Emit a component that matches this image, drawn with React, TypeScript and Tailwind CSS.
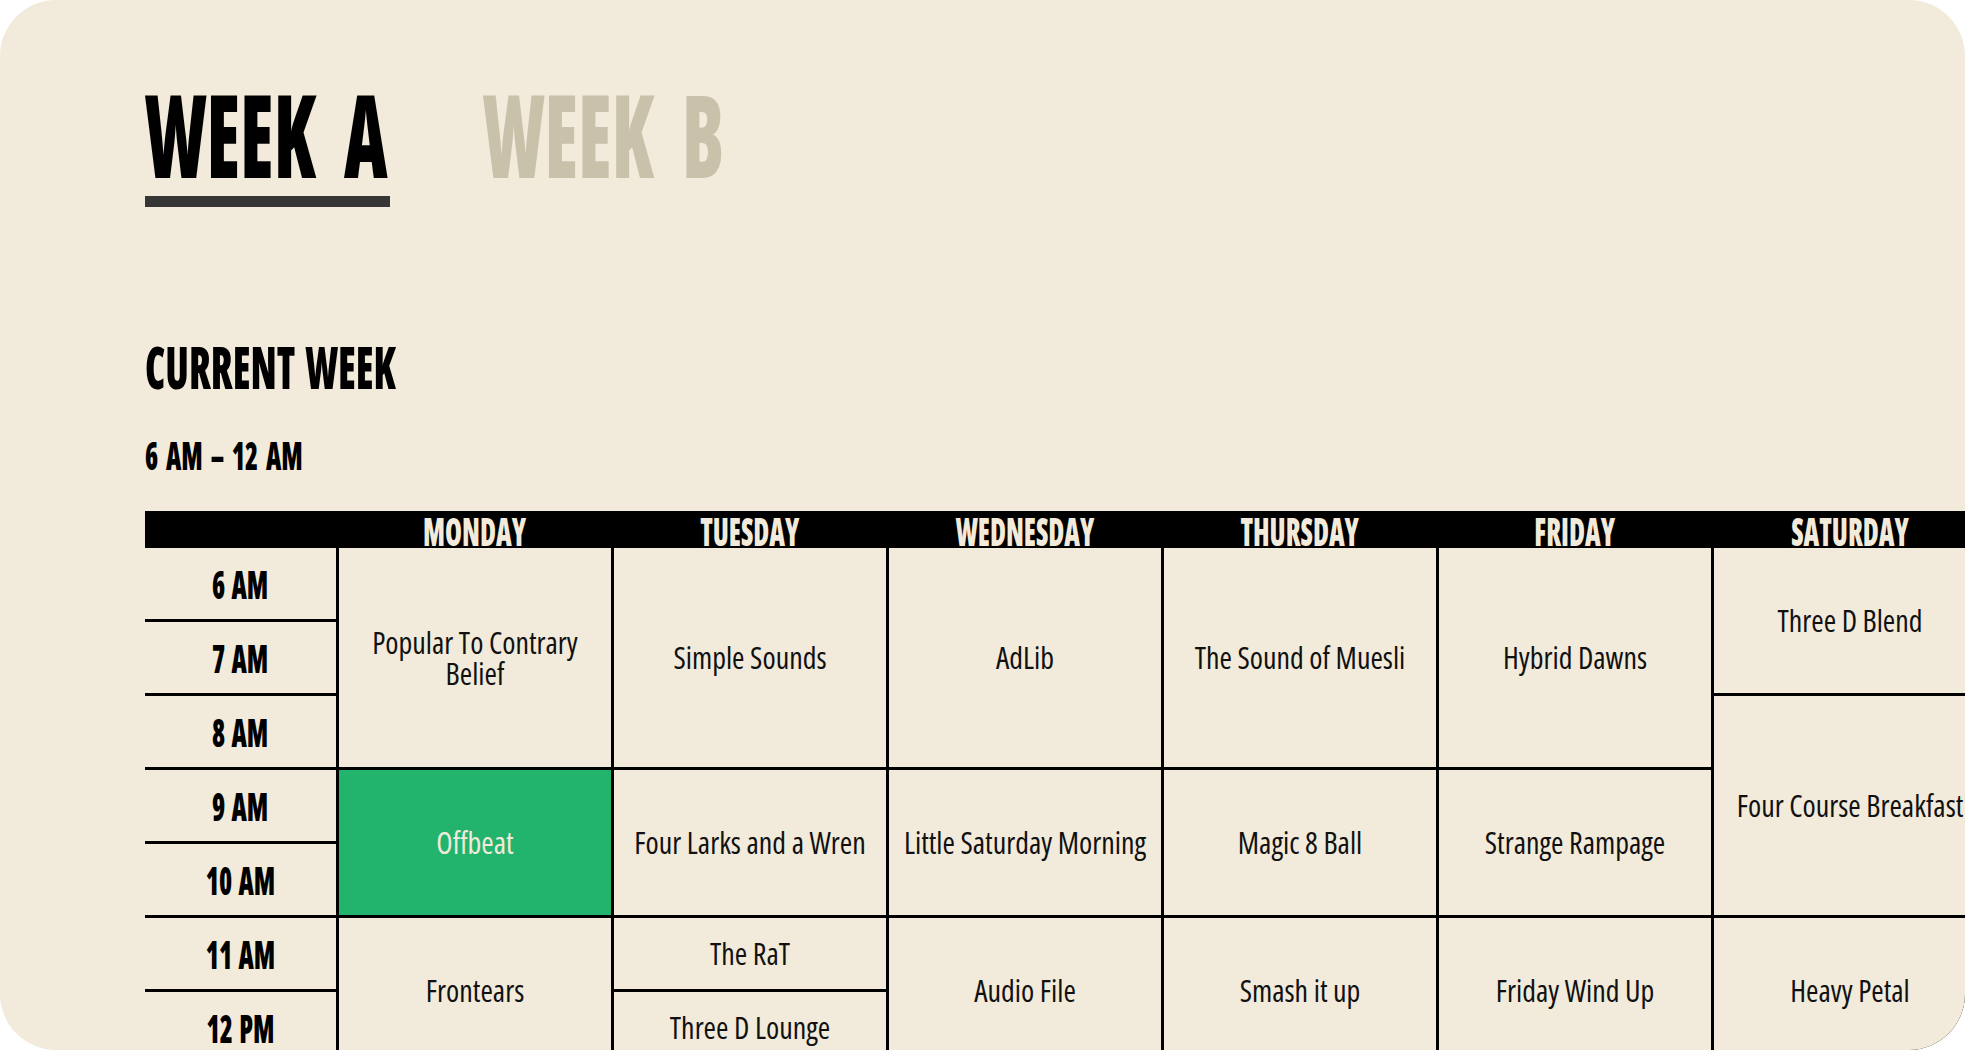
type Show = { title: string; span: 1 | 2 | 3; live?: boolean };

const times = ["6 AM", "7 AM", "8 AM", "9 AM", "10 AM", "11 AM", "12 PM"];

const schedule: { day: string; shows: Show[] }[] = [
  {
    day: "MONDAY",
    shows: [
      { title: "Popular To Contrary Belief", span: 3 },
      { title: "Offbeat", span: 2, live: true },
      { title: "Frontears", span: 2 },
    ],
  },
  {
    day: "TUESDAY",
    shows: [
      { title: "Simple Sounds", span: 3 },
      { title: "Four Larks and a Wren", span: 2 },
      { title: "The RaT", span: 1 },
      { title: "Three D Lounge", span: 1 },
    ],
  },
  {
    day: "WEDNESDAY",
    shows: [
      { title: "AdLib", span: 3 },
      { title: "Little Saturday Morning", span: 2 },
      { title: "Audio File", span: 2 },
    ],
  },
  {
    day: "THURSDAY",
    shows: [
      { title: "The Sound of Muesli", span: 3 },
      { title: "Magic 8 Ball", span: 2 },
      { title: "Smash it up", span: 2 },
    ],
  },
  {
    day: "FRIDAY",
    shows: [
      { title: "Hybrid Dawns", span: 3 },
      { title: "Strange Rampage", span: 2 },
      { title: "Friday Wind Up", span: 2 },
    ],
  },
  {
    day: "SATURDAY",
    shows: [
      { title: "Three D Blend", span: 2 },
      { title: "Four Course Breakfast", span: 3 },
      { title: "Heavy Petal", span: 2 },
    ],
  },
];

// row is 71px + 3px line
const spanHeight = {
  1: "h-[71px]",
  2: "h-[145px]",
  3: "h-[219px]",
};

const heading = "font-['Open_Sans',sans-serif] font-extrabold font-stretch-condensed leading-none whitespace-nowrap";

export default function App() {
  return (
    <div className="h-[1050px] w-full bg-white">
      <div className="h-full rounded-[56px] bg-[#f2eada] overflow-hidden pt-[76px] pl-[145px] text-black">
        {/* week tabs */}
        <div className="flex gap-[93px]">
          <div className="w-[245px] shrink-0">
            <div className={`${heading} text-[115px]`}>
              <span className="inline-block origin-left scale-x-[0.66] [word-spacing:0.2em]">WEEK A</span>
            </div>
            <div className="mt-[5px] h-[11px] bg-[#363636]" />
          </div>
          <div className={`${heading} w-[245px] shrink-0 text-[115px] text-[#c9c1aa]`}>
            <span className="inline-block origin-left scale-x-[0.66] [word-spacing:0.2em]">WEEK B</span>
          </div>
        </div>

        <h2 className={`${heading} mt-[130px] text-[59px]`}>
          <span className="inline-block origin-left scale-x-[0.68] [word-spacing:0.08em]">CURRENT WEEK</span>
        </h2>
        <p className={`${heading} mt-[40px] text-[38px]`}>
          <span className="inline-block origin-left scale-x-70 [word-spacing:0.12em]">6 AM – 12 AM</span>
        </p>

        {/* timetable */}
        <div className="mt-[37px] flex w-max gap-[3px] bg-black">
          <div className="flex w-[191px] flex-col gap-[3px]">
            <div className="h-[34px] bg-black" />
            {times.map((t) => (
              <div key={t} className="flex h-[71px] items-center justify-center bg-[#f2eada]">
                <span className={`${heading} inline-block scale-x-70 text-[38px] [word-spacing:0.06em]`}>{t}</span>
              </div>
            ))}
          </div>

          {schedule.map((col) => (
            <div key={col.day} className="flex w-[272px] flex-col gap-[3px]">
              <div className="flex h-[34px] items-start justify-center bg-black">
                <span className={`${heading} inline-block scale-x-70 text-[39px] text-[#f2eada]`}>{col.day}</span>
              </div>
              {col.shows.map((s) => (
                <div
                  key={s.title}
                  className={`flex items-center justify-center px-3 text-center font-['Open_Sans',sans-serif] font-stretch-condensed text-[30px] leading-[31px] ${spanHeight[s.span]} ${
                    s.live ? "bg-[#22b36c] text-[#f2eada]" : "bg-[#f2eada] text-[#111]"
                  }`}
                >
                  {s.title}
                </div>
              ))}
            </div>
          ))}
        </div>
      </div>
    </div>
  );
}
